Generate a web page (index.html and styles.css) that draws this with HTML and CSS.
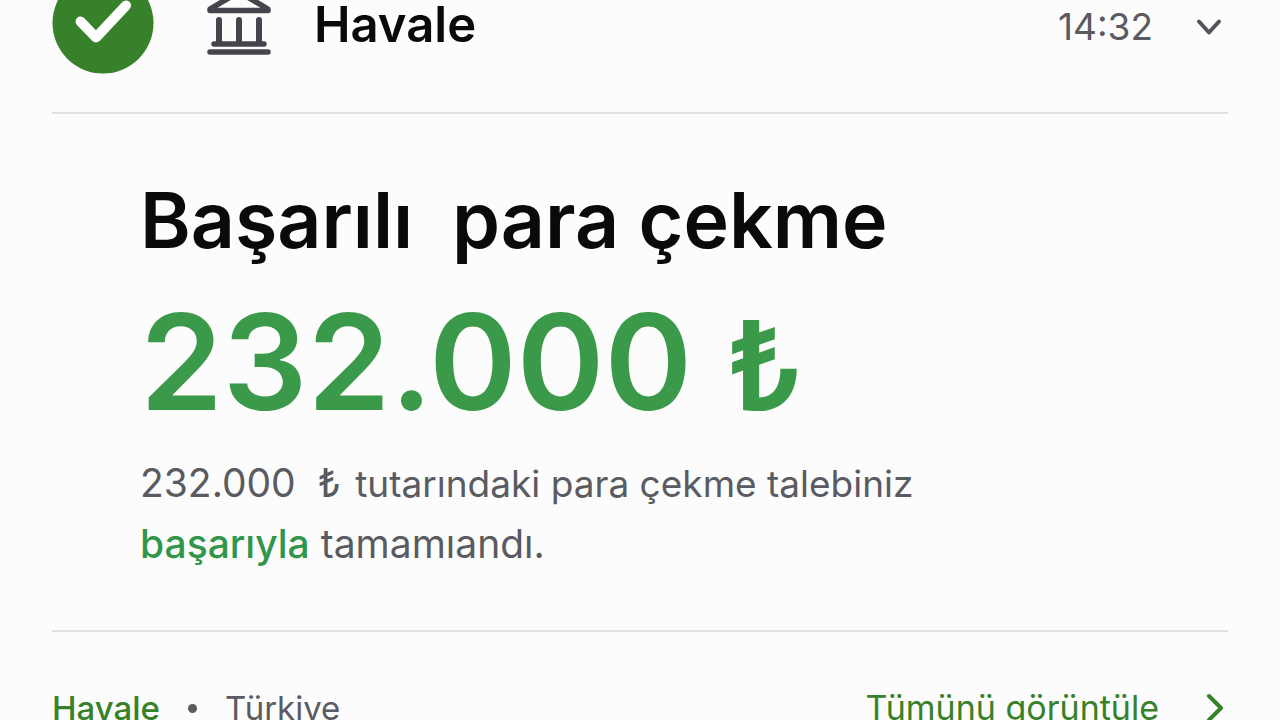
FILE: index.html
```html
<!DOCTYPE html>
<html lang="tr">
<head>
    <meta charset="UTF-8">
    <meta name="viewport" content="width=device-width, initial-scale=1.0">
    <title>Havale</title>
    <link rel="stylesheet" href="styles.css">
</head>
<body>
    <main class="card">
        <header class="card-header">
            <svg class="status-icon" viewBox="0 0 102 102" aria-hidden="true">
                <circle cx="51" cy="51" r="50.5" fill="#37812a"/>
                <path d="M28.500 49.500L44 65.500L74 33.500" fill="none" stroke="#fff" stroke-width="10" stroke-linecap="round" stroke-linejoin="round"/>
            </svg>
            <svg class="bank-icon" viewBox="0 0 66 70" aria-hidden="true">
                <g fill="none" stroke="#44454d" stroke-width="5.500" stroke-linecap="round" stroke-linejoin="round">
                    <path d="M4 21L33 4L62 21V22.500H4Z"/>
                    <path d="M13 32V54M33 32V54M53 32V54" stroke-width="6"/>
                    <path d="M8 56H58M4 64H62"/>
                </g>
            </svg>
            <h2>Havale</h2>
            <time class="time" datetime="14:32">14:32</time>
            <button type="button" class="toggle" aria-label="Daralt">
                <svg viewBox="0 0 28 18" aria-hidden="true">
                    <path d="M4 3.500L14 14.500L24 3.500" fill="none" stroke="#54555b" stroke-width="4" stroke-linecap="round" stroke-linejoin="round"/>
                </svg>
            </button>
        </header>

        <section class="card-body">
            <h1>Başarılı&nbsp; para çekme</h1>
            <div class="amount">232.000 <span class="currency">₺</span></div>
            <p><span class="sum">232.000&nbsp; ₺</span> tutarındaki para çekme talebiniz</p>
            <p class="result"><span class="success">başarıyla</span> tamamıandı.</p>
        </section>

        <footer class="card-footer">
            <span class="method">Havale</span>
            <span class="dot"></span>
            <span class="country">Türkiye</span>
            <a href="#" class="view-all">
                Tümünü görüntüle
                <svg viewBox="0 0 20 32" aria-hidden="true">
                    <path d="M4 4L16 16L4 28" fill="none" stroke="#37812a" stroke-width="4" stroke-linecap="round" stroke-linejoin="round"/>
                </svg>
            </a>
        </footer>
    </main>
</body>
</html>
```

FILE: styles.css
```css
body {
    margin: 0;
    height: 100vh;
    overflow: hidden;
    background-color: #fcfcfc;
    font-family: Inter, "Liberation Sans", sans-serif;
    color: #0a0a0a;
}

/* the top of the card is scrolled out of view */
.card {
    margin-top: -28px;
    padding: 0 52px;
}

.card-header {
    display: flex;
    align-items: center;
    padding-bottom: 38px;
    border-bottom: 2px solid #e2e2e3;
}

.status-icon {
    width: 102px;
    height: 102px;
}

.bank-icon {
    width: 66px;
    height: 70px;
    margin: 0 42px 0 52px;
}

h1, h2, p {
    margin: 0;
}

h2 {
    padding-top: 4px;
    font-size: 49px;
    font-weight: 600;
    line-height: 60px;
}

.time {
    margin-left: auto;
    padding-top: 8px;
    color: #5a5b61;
    font-size: 37px;
    line-height: 60px;
}

.toggle {
    display: flex;
    margin-left: 42px;
    padding: 8px 5px 0 0;
    border: none;
    background: none;
    cursor: pointer;
}

.toggle svg {
    width: 28px;
    height: 18px;
}

.card-body {
    padding: 58px 88px 56px;
    border-bottom: 2px solid #e2e2e3;
}

h1 {
    font-size: 77px;
    font-weight: 600;
    line-height: 96px;
}

.amount {
    margin: 26px 0 20px;
    color: #3b994a;
    font-size: 133px;
    font-weight: 600;
    line-height: 136px;
}

.currency {
    font-size: 124px;
}

p {
    color: #5a5b61;
    font-size: 37px;
    line-height: 60px;
}

.sum {
    margin-right: 4px;
    font-size: 39px;
}

.result {
    font-size: 39px;
}

.success {
    color: #32964a;
    font-weight: 500;
}

.card-footer {
    display: flex;
    align-items: center;
    padding: 51px 0 26px;
    font-size: 33px;
    line-height: 50px;
}

.method {
    color: #37812a;
    font-weight: 500;
}

.dot {
    width: 9px;
    height: 9px;
    margin: 0 28px;
    border-radius: 50%;
    background-color: #5a5b61;
}

.country {
    color: #5a5b61;
}

.view-all {
    display: flex;
    align-items: center;
    gap: 46px;
    margin-left: auto;
    padding-right: 3px;
    color: #37812a;
    font-size: 34px;
    text-decoration: none;
}

.view-all svg {
    width: 20px;
    height: 32px;
}
```
